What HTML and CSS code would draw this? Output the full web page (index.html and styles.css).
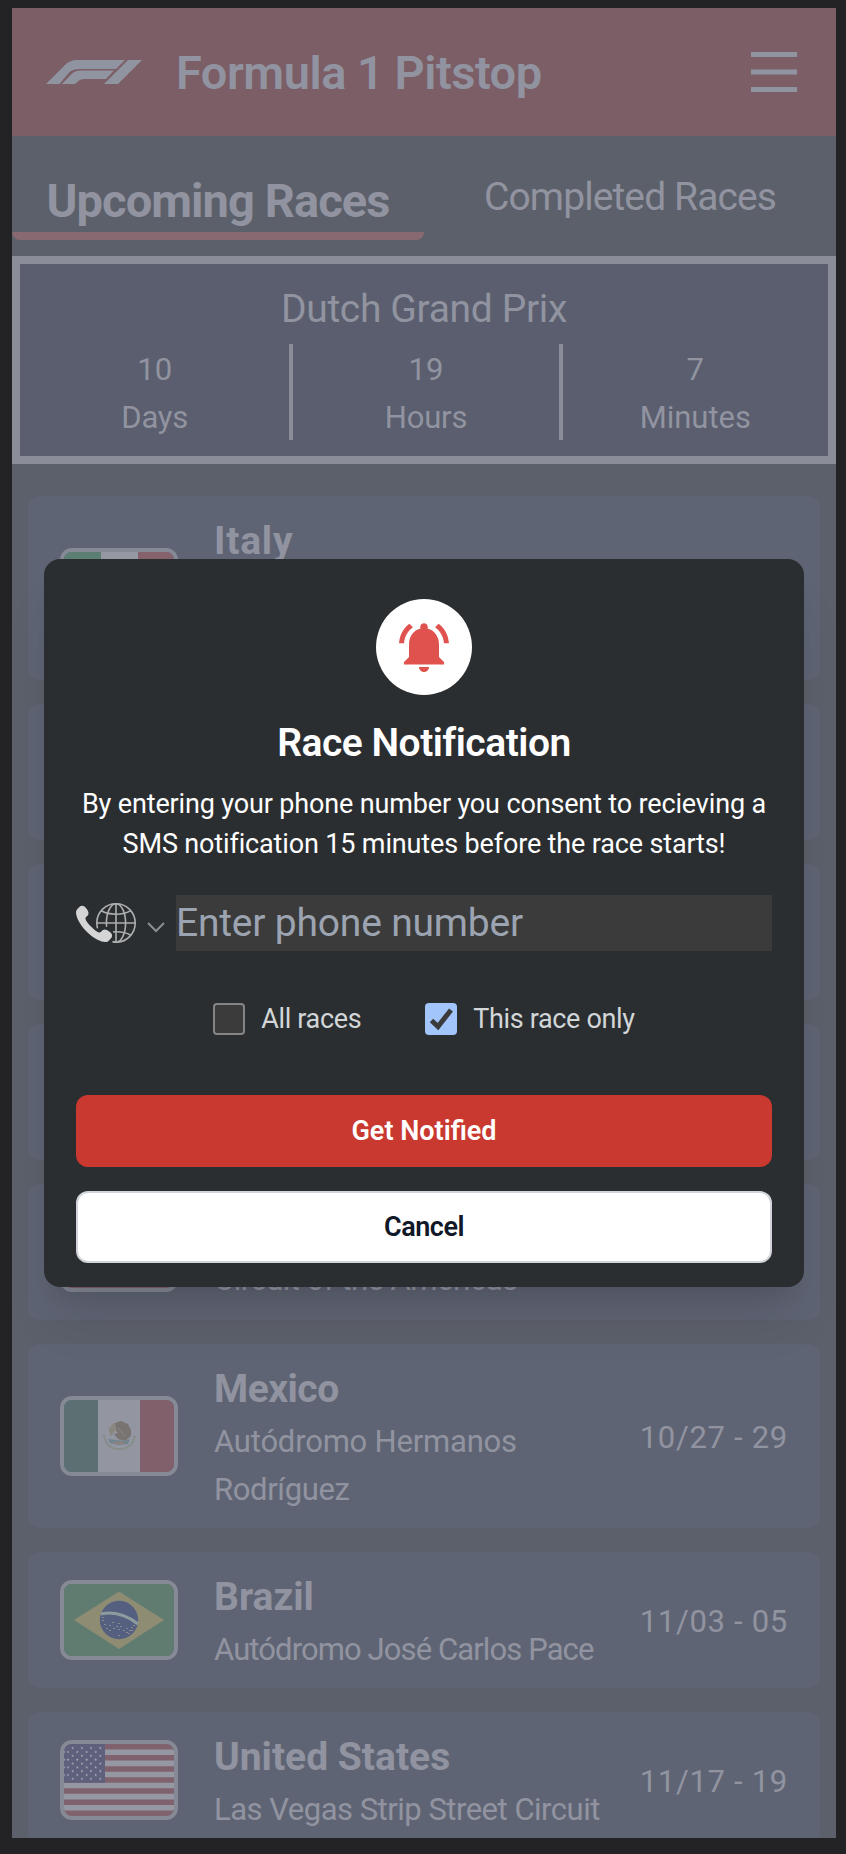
FILE: index.html
```html
<!DOCTYPE html>
<html lang="en">
<head>
<meta charset="utf-8">
<title>Formula 1 Pitstop</title>
<link rel="stylesheet" href="styles.css">
</head>
<body>
<svg class="defs" width="0" height="0" aria-hidden="true">
  <defs>
    <g id="star"><path d="M0-1.5.4-.5 1.5-.4.6.3.9 1.4 0 .8-.9 1.4-.6.3-1.5-.4-.4-.5z"/></g>
    <g id="stars-odd"><use href="#star" x="8.7"/><use href="#star" x="18"/><use href="#star" x="27"/><use href="#star" x="36.3"/></g>
    <g id="stars-even"><use href="#star" x="0"/><use href="#star" x="4"/><use href="#star" x="13.3"/><use href="#star" x="22.7"/><use href="#star" x="31.7"/></g>
    <symbol id="flag-us" viewBox="0 0 110 72">
      <rect width="110" height="72" fill="#9598a2"/>
      <path d="M0 2.77H110M0 13.85H110M0 24.93H110M0 36H110M0 47.08H110M0 58.16H110M0 69.24H110" stroke="#80616e" stroke-width="5.54"/>
      <rect width="41" height="38.8" fill="#5f607b"/>
      <g fill="#a0a3af">
        <use href="#stars-odd" y="4"/><use href="#stars-even" y="7.9"/><use href="#stars-odd" y="11.7"/><use href="#stars-even" y="15.6"/><use href="#stars-odd" y="19.4"/><use href="#stars-even" y="23.3"/><use href="#stars-odd" y="27.1"/><use href="#stars-even" y="31"/><use href="#stars-odd" y="34.8"/>
      </g>
    </symbol>
  </defs>
</svg>
<div class="app">
  <header class="header">
    <svg class="logo" viewBox="0 0 96 24"><path d="M0 24 19.500 4.500Q24 0 31 0H79L70 9H34Q27 9 23.500 12L13.500 24ZM16 24 25 14.500Q29 10.500 35 10.500H68L60 19H38Q35 19 33 20.500L29 24ZM82 0H96L72 24H58Z"/></svg>
    <h1 class="brand"><span class="snug">Formula 1 Pitstop</span></h1>
    <svg class="menu" viewBox="0 0 46 40"><path d="M0 2.500H46M0 20H46M0 37.500H46"/></svg>
  </header>
  <nav class="tabs">
    <div class="tab tab-active"><span class="tab-label tight">Upcoming Races</span><div class="tab-bar"></div></div>
    <div class="tab"><span class="tab-label tight">Completed Races</span></div>
  </nav>
  <section class="countdown">
    <h2 class="gp"><span class="close">Dutch Grand Prix</span></h2>
    <div class="units">
      <div class="unit"><span>10</span><span class="near">Days</span></div>
      <div class="unit"><span>19</span><span class="near">Hours</span></div>
      <div class="unit"><span>7</span><span>Minutes</span></div>
    </div>
  </section>
  <main class="races">
    <article class="race tall">
      <svg class="flag" viewBox="0 0 110 72"><path fill="#5c7f74" d="M0 0h37v72H0z"/><path fill="#9598a2" d="M37 0h37v72H37z"/><path fill="#86626d" d="M74 0h36v72H74z"/></svg>
      <div class="info"><h3 class="country"><span class="wide">Italy</span></h3></div>
    </article>
    <article class="race"></article>
    <article class="race"></article>
    <article class="race"></article>
    <article class="race">
      <svg class="flag"><use href="#flag-us"/></svg>
      <div class="info end"><p class="circuit"><span class="snug">Circuit of the Americas</span></p></div>
    </article>
    <article class="race tall">
      <svg class="flag" viewBox="0 0 110 72">
        <path fill="#5c7074" d="M0 0h34v72H0z"/><path fill="#9396a0" d="M34 0h42v72H34z"/><path fill="#81606b" d="M76 0h34v72H76z"/>
        <path d="M40 35Q42 49 55 49 69 49 71 35" fill="none" stroke="#828b83" stroke-width="2" stroke-dasharray="2 .7"/>
        <path d="M51 23 57 21 64 24 67 30 67 36 61 41 54 39 50 34 54 33 50 28Z" fill="#797371"/>
        <path d="M45 29 50 23 52 29 47 36ZM54 28 61 36" fill="#8a8680" stroke="#8b8983"/>
        <path d="M44 39 52 40 60 41 66 39 64 44 54 45 46 43Z" fill="#71858e"/>
        <path d="M50 43h10" stroke="#92817b" stroke-width="2"/>
      </svg>
      <div class="info"><h3 class="country"><span class="snug">Mexico</span></h3><p class="circuit"><span class="near">Autódromo Hermanos</span><br><span class="close">Rodríguez</span></p></div>
      <time class="date">10/27 - 29</time>
    </article>
    <article class="race">
      <svg class="flag" viewBox="0 0 110 72">
        <path fill="#607c70" d="M0 0h110v72H0z"/><path fill="#8f8c74" d="M10 36 55 7.500 100 36 55 65Z"/><circle cx="55" cy="36" r="19.200" fill="#555f80"/>
        <path d="M37 30Q56 26 74 40" fill="none" stroke="#8f9c9f" stroke-width="3"/>
        <path d="M39 36v1M41 40v1M43 44v1M46 41v1M49 38v1M50 44v1M55 39v1M53 42v1M57 42v1M55 45v1M60 46v1M63 44v1M65 49v1M66 46v1M68 43v1M70 41v1M63 48v1M55 51v1M46 46v1M68 46v1M39 33v1" stroke="#a2a59a" stroke-width="1.300"/>
      </svg>
      <div class="info"><h3 class="country">Brazil</h3><p class="circuit"><span class="tight">Autódromo José Carlos Pace</span></p></div>
      <time class="date">11/03 - 05</time>
    </article>
    <article class="race">
      <svg class="flag"><use href="#flag-us"/></svg>
      <div class="info"><h3 class="country">United States</h3><p class="circuit"><span class="snug">Las Vegas Strip Street Circuit</span></p></div>
      <time class="date">11/17 - 19</time>
    </article>
  </main>
</div>
<div class="overlay">
  <div class="modal" role="dialog">
    <div class="bell"><svg viewBox="0 0 24 24"><path d="M7.580 4.080 6.150 2.650C3.750 4.480 2.170 7.300 2.030 10.500h2c.15-2.650 1.510-4.970 3.550-6.420zm12.390 6.420h2c-.15-3.200-1.730-6.020-4.120-7.850l-1.420 1.430c2.020 1.450 3.390 3.770 3.540 6.420zM18 11c0-3.070-1.640-5.640-4.500-6.320V4c0-.83-.67-1.500-1.500-1.500s-1.500.67-1.500 1.500v.68C7.630 5.360 6 7.920 6 11v5l-2 2v1h16v-1l-2-2v-5zm-6 11c.14 0 .27-.01.4-.04.65-.14 1.180-.58 1.440-1.180.1-.24.15-.5.15-.78h-4c.01 1.100.9 2 2.010 2z"/></svg></div>
    <h2 class="modal-title"><span class="snug">Race Notification</span></h2>
    <p class="consent">By entering your phone number you consent to recieving a<br>SMS notification 15 minutes before the race starts!</p>
    <div class="phone">
      <svg class="intl" viewBox="0 0 75 50">
        <g class="globe"><path stroke-linecap="round" d="M47.200 36.100C48.100 36 49 36 50 36c7.400 0 14 1.700 18.500 4.300"/><path d="M68.600 9.600C64.200 12.300 57.500 14 50 14c-7.400 0-14-1.700-18.500-4.300"/><path d="M26 25H74M50 1V49"/><path stroke-linecap="round" d="M46.300 48.700c1.200.2 2.500.3 3.700.3 13.300 0 24-10.700 24-24S63.300 1 50 1 26 11.700 26 25c0 2 .3 3.900.7 5.800"/><path stroke-linecap="round" d="M46.800 48.200c1 .6 2.100.8 3.200.8 6.600 0 12-10.700 12-24S56.600 1 50 1 38 11.700 38 25c0 1.400.1 2.700.2 4"/></g>
        <path class="handset" d="M12.400 17.900c2.900-2.900 5.400-4.800.3-11.200S4.100 5.200 1.300 8.100C-2 11.400 1.100 23.500 13.100 35.600s24.300 15.200 27.500 11.900c2.800-2.800 7.800-6.300 1.400-11.500s-8.300-2.600-11.200.3c-2 2-7.200-2.200-11.700-6.700S10.400 19.900 12.400 17.900z"/>
      </svg>
      <svg class="chevron" viewBox="0 0 18 11"><path d="M1 1 9 9 17 1"/></svg>
      <div class="field"><span class="near">Enter phone number</span></div>
    </div>
    <div class="choices">
      <label class="choice"><i class="box"></i><span class="close">All races</span></label>
      <label class="choice"><i class="box checked"><svg viewBox="0 0 32 32"><path d="M6.500 17.500 13 23.500 26 7"/></svg></i><span class="close">This race only</span></label>
    </div>
    <button class="btn primary">Get Notified</button>
    <button class="btn secondary"><span class="snug">Cancel</span></button>
  </div>
</div>
</body>
</html>
```
FILE: styles.css
```css
* { box-sizing: border-box; margin: 0; padding: 0; }
body { height: 1854px; overflow: hidden; background: #232325; color: #9194a0; font-family: Roboto, "Noto Sans", sans-serif; padding: 8px 10px 16px 12px; }
.defs { position: absolute; }

/* letter-spacing steps */
.wide { letter-spacing: .8px; }
.near { letter-spacing: -.2px; }
.close { letter-spacing: -.35px; }
.snug { letter-spacing: -.5px; }
.tight { letter-spacing: -.9px; }

.app { height: 1830px; overflow: hidden; background: #5c606a; }
.header { height: 128px; background: #7c5e66; display: flex; align-items: center; padding: 0 39px 0 34px; }
.logo { width: 96px; height: 24px; fill: #9094a0; margin-right: 34px; }
.brand { font-size: 47px; font-weight: 600; flex: 1; }
.menu { width: 46px; height: 40px; stroke: #9094a0; stroke-width: 5; }
.tabs { height: 120px; padding-top: 32px; display: grid; grid-template-columns: 1fr 1fr; }
.tab { text-align: center; font-size: 39px; line-height: 56px; padding-top: 1px; }
.tab-label { display: inline-block; }
.tab-active { font-size: 47px; line-height: 63px; font-weight: 700; }
.tab-bar { height: 8px; background: #886971; border-radius: 0 0 8px 8px; }
.countdown { height: 208px; border: 8px solid #8b8e99; background: #5a5e6e; padding-top: 17px; text-align: center; }
.gp { font-size: 39px; line-height: 56px; font-weight: 400; margin-bottom: 7px; }
.units { display: grid; grid-template-columns: repeat(3, 1fr); }
.unit { display: flex; flex-direction: column; align-items: center; height: 96px; padding-top: 2px; font-size: 31px; line-height: 48px; }
.unit + .unit { border-left: 4px solid #8b8e99; }
.races { display: flex; flex-direction: column; gap: 24px; padding: 32px 16px; }
.race { flex: none; height: 136px; background: #5f6474; border-radius: 12px; display: flex; align-items: center; padding: 16px 32px; }
.race.tall { height: 184px; }
.flag { flex: none; width: 118px; height: 80px; border: 4px solid #868a97; border-radius: 12px; margin-right: 36px; }
.info { flex: 1; align-self: stretch; display: flex; flex-direction: column; white-space: nowrap; padding-top: 1px; }
.info.end { justify-content: flex-end; }
.country { font-size: 39px; line-height: 56px; font-weight: 700; margin-bottom: 1px; }
.circuit { font-size: 31px; line-height: 48px; }
.date { font-size: 31px; letter-spacing: .7px; white-space: nowrap; padding-top: 2px; }

.overlay { position: absolute; left: 12px; top: 8px; width: 824px; height: 1830px; display: flex; align-items: center; justify-content: center; overflow: hidden; }
.modal { width: 760px; height: 728px; background: #2b2e31; border-radius: 16px; padding: 40px 32px 24px; color: #fff; text-align: center; box-shadow: 0 40px 50px -10px rgba(0,0,0,.1), 0 16px 20px -12px rgba(0,0,0,.1); }
.bell { width: 96px; height: 96px; border-radius: 50%; background: #fff; margin: 0 auto 24px; display: flex; align-items: center; justify-content: center; }
.bell svg { width: 60px; height: 60px; fill: #df524d; }
.modal-title { font-size: 39px; line-height: 48px; font-weight: 600; margin-bottom: 17px; }
.consent { font-size: 27px; line-height: 40px; letter-spacing: -.15px; white-space: nowrap; }
.phone { display: flex; align-items: center; margin-top: 31px; }
.intl { width: 60px; height: 40px; }
.globe { fill: none; stroke: #adafb0; stroke-width: 2; }
.handset { fill: #d5d5d5; }
.chevron { width: 18px; height: 11px; margin: 8px 11px 0; fill: none; stroke: #8c8e90; stroke-width: 2; }
.field { flex: 1; height: 56px; line-height: 57px; background: #3b3b3b; color: #9ca3b1; font-size: 39px; text-align: left; }
.choices { display: flex; justify-content: center; gap: 64px; margin: 52px 0 60px; }
.choice { display: flex; align-items: center; gap: 16px; height: 32px; font-size: 27px; color: #d2d6d8; }
.box { width: 32px; height: 32px; border: 2px solid #858585; border-radius: 4px; background: #3b3b3b; }
.box.checked { border: 0; background: #a2c6fc; }
.box svg { display: block; fill: none; stroke: #3b3b3b; stroke-width: 5; }
.btn { display: block; width: 100%; height: 72px; border: 0; border-radius: 12px; font: 600 27px Roboto, sans-serif; }
.primary { background: #c93930; color: #fff; margin-bottom: 24px; }
.secondary { background: #fff; color: #111827; border: 2px solid #d1d5db; }
```
